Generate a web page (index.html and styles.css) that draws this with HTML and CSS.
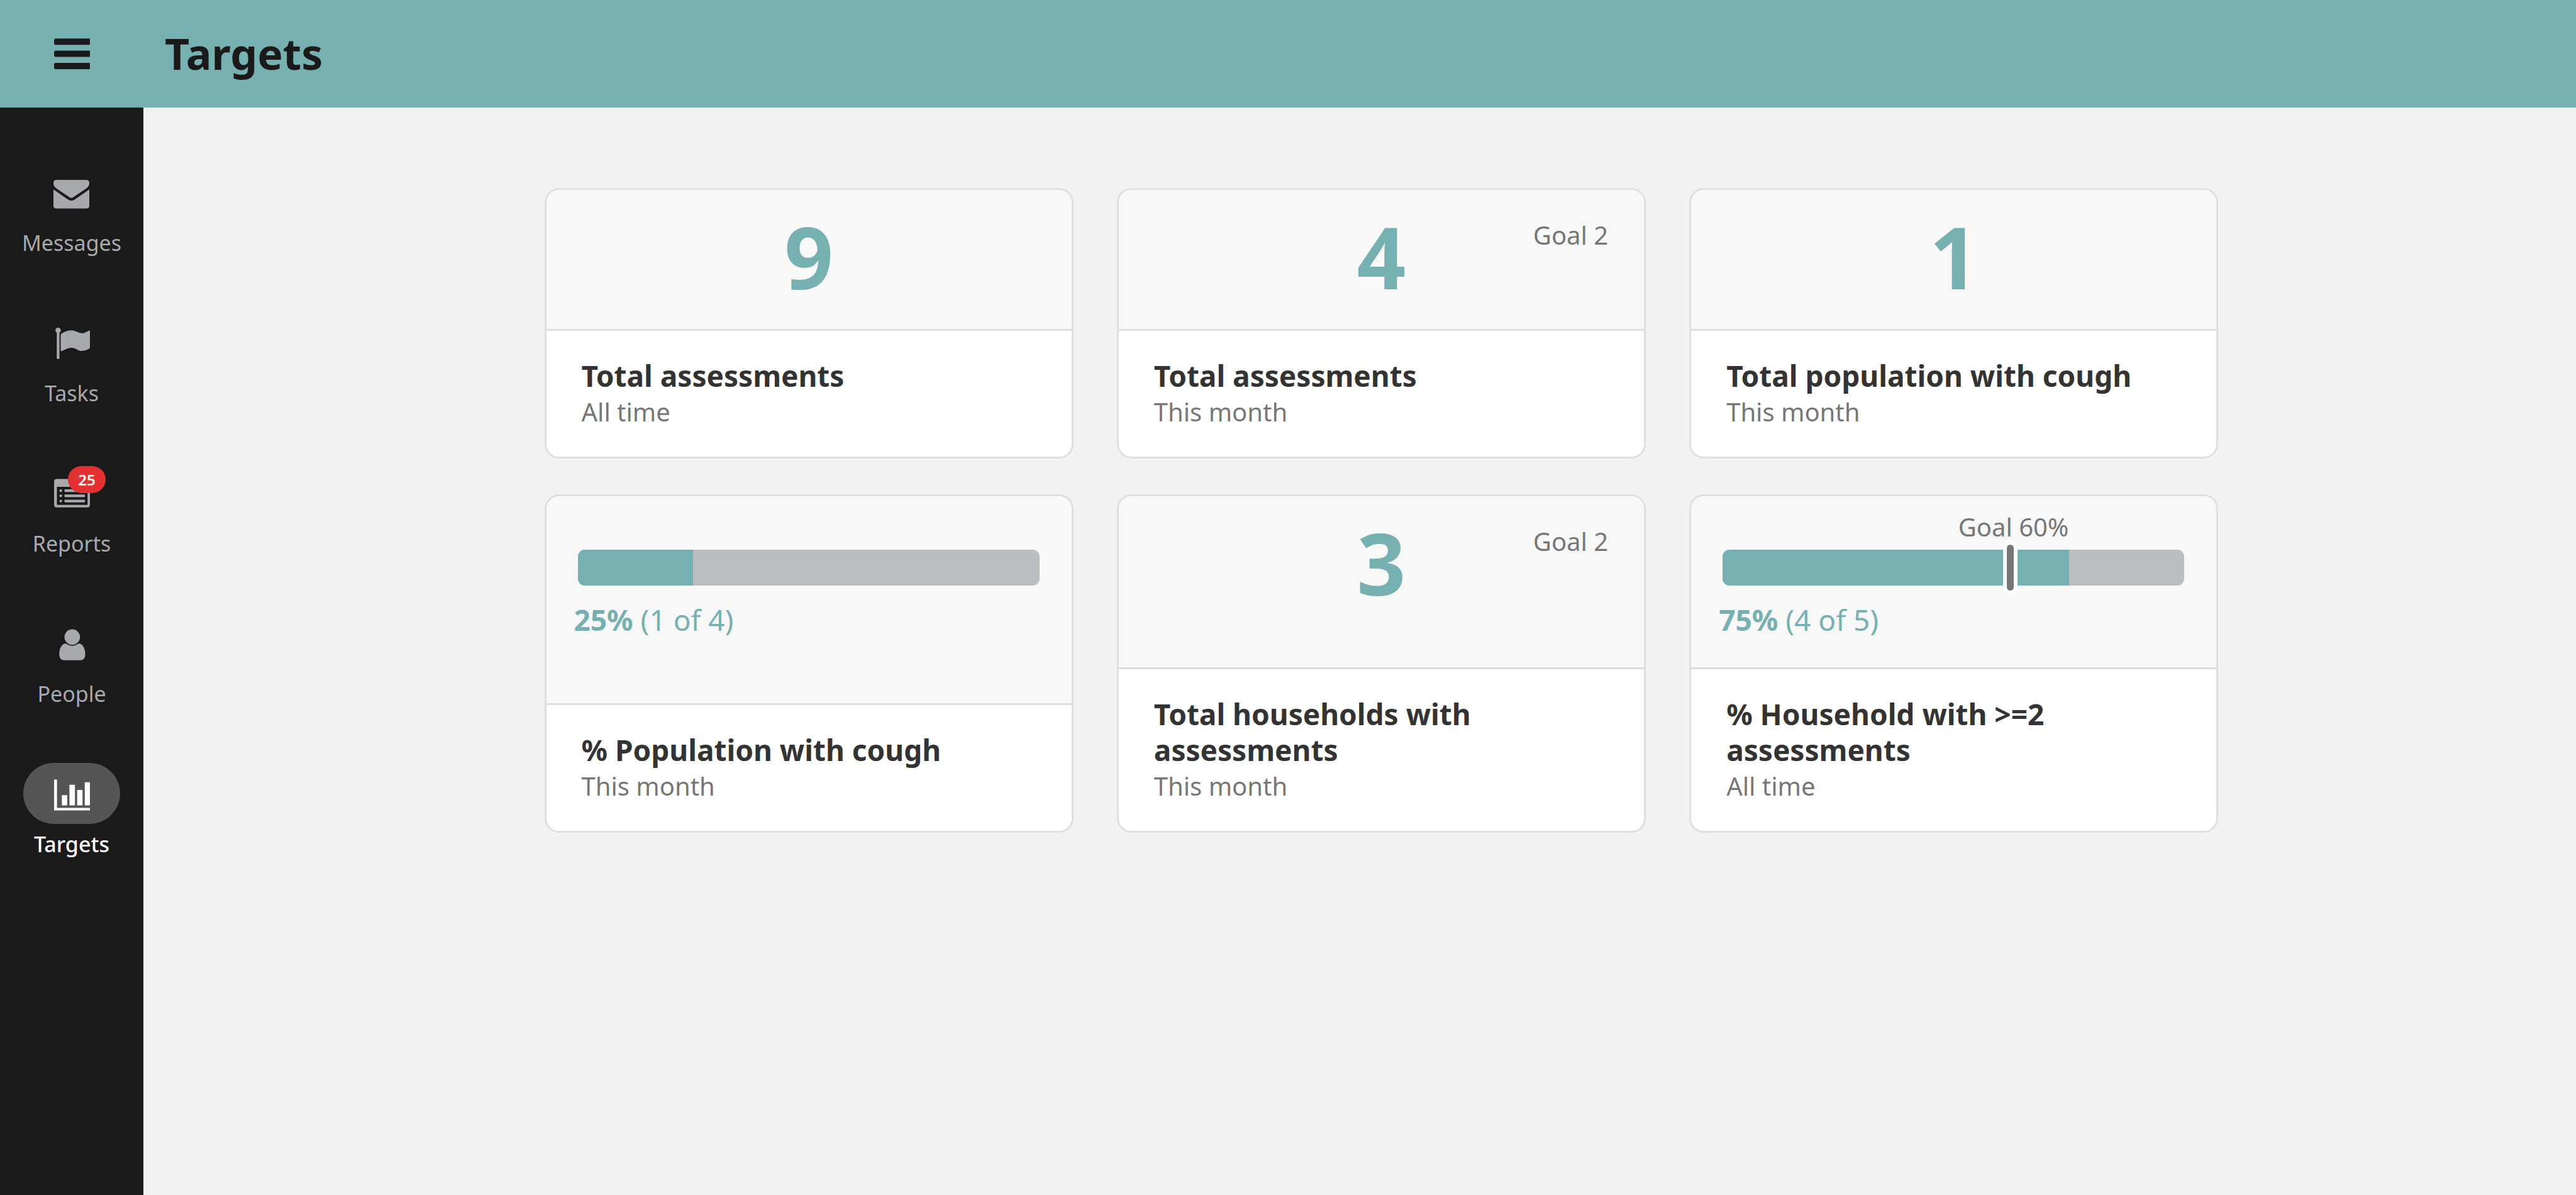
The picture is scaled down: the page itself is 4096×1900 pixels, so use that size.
FILE: index.html
```html
<!DOCTYPE html>
<html lang="en">
<head>
<meta charset="utf-8">
<title>Targets</title>
<link rel="stylesheet" href="styles.css">
</head>
<body>
<header class="topbar">
  <button class="menu-button" type="button" aria-label="Menu">
    <svg class="icon" viewBox="0 0 80 80" aria-hidden="true">
      <path d="M4 6H79Q80 6 80 7V19Q80 20 79 20H4Q0 20 0 16V10Q0 6 4 6ZM4 33H79Q80 33 80 34V46Q80 47 79 47H4Q0 47 0 43V37Q0 33 4 33ZM4 60.500H79Q80 60.500 80 61.500V73.500Q80 74.500 79 74.500H4Q0 74.500 0 70.500V64.500Q0 60.500 4 60.500Z"/>
    </svg>
  </button>
  <h1 class="page-title">Targets</h1>
</header>
<div class="layout">
  <nav class="sidebar">
    <a class="nav-item" href="#messages">
      <span class="nav-pill">
        <svg class="icon" viewBox="0 0 80 80" aria-hidden="true">
          <path d="M7 12.500H73Q80 12.500 80 20Q80 27 73 32L45 51Q40 55 35 51L7 32Q0 27 0 20Q0 12.500 7 12.500Z"/>
          <path d="M0 34L32 56Q40 62 48 56L80 34V70Q80 76.500 73 76.500H7Q0 76.500 0 70Z"/>
        </svg>
      </span>
      <span class="nav-label">Messages</span>
    </a>
    <a class="nav-item" href="#tasks">
      <span class="nav-pill">
        <svg class="icon" viewBox="0 0 80 80" aria-hidden="true">
          <circle cx="9" cy="13" r="6"/>
          <path d="M6 13H12V75Q12 77 10 77H8Q6 77 6 75Z"/>
          <path d="M14.700 24Q14.700 21 17 20Q28 13 39 13C48 13 54 19.400 62 19.400C70 19.400 76 13.200 78.500 13.200Q80 13 80 15V50Q80 52.600 78 54Q70 59 62 59C53 59 48 51.800 39 51.800Q30 51.800 18 59Q14.700 60 14.700 57Z"/>
        </svg>
      </span>
      <span class="nav-label">Tasks</span>
    </a>
    <a class="nav-item" href="#reports">
      <span class="nav-pill">
        <svg class="icon" viewBox="0 0 80 80" aria-hidden="true">
          <path fill-rule="evenodd" d="M6 9H74Q80 9 80 15V66.500Q80 72.500 74 72.500H6Q0 72.500 0 66.500V15Q0 9 6 9ZM6.300 26.700V67H74.700V26.700Z"/>
          <circle cx="15" cy="35.300" r="3"/><circle cx="15" cy="46.800" r="3"/><circle cx="15" cy="58.300" r="3"/>
          <rect x="23" y="32.300" width="46" height="6" rx="2"/><rect x="23" y="43.800" width="46" height="6" rx="2"/><rect x="23" y="55.300" width="46" height="6" rx="2"/>
        </svg>
        <span class="badge">25</span>
      </span>
      <span class="nav-label">Reports</span>
    </a>
    <a class="nav-item" href="#people">
      <span class="nav-pill">
        <svg class="icon" viewBox="0 0 80 80" aria-hidden="true">
          <circle cx="40.500" cy="26.500" r="17.300"/>
          <path d="M26.500 41Q40.500 51.500 54.500 41C64 41 69.500 52 69.500 65Q69.500 78.400 58.500 78.400H22.500Q11.500 78.400 11.500 65C11.500 52 17 41 26.500 41Z"/>
        </svg>
      </span>
      <span class="nav-label">People</span>
    </a>
    <a class="nav-item is-active" href="#targets" aria-current="page">
      <span class="nav-pill">
        <svg class="icon" viewBox="0 0 80 80" aria-hidden="true">
          <path d="M0 9H6.500V72.300H80V78H0ZM17.300 43.700H29.300V66.600H17.300ZM34.300 20.800H46.500V66.600H34.300ZM51.500 32.200H63.500V66.600H51.500ZM68.500 15H80V66.600H68.500Z"/>
        </svg>
      </span>
      <span class="nav-label">Targets</span>
    </a>
  </nav>
  <main class="content">
    <div class="targets">
      <section class="card">
        <div class="card-figure">
          <p class="count">9</p>
        </div>
        <div class="card-body">
          <h2 class="card-title">Total assessments</h2>
          <p class="card-period">All time</p>
        </div>
      </section>
      <section class="card">
        <div class="card-figure">
          <p class="count">4</p>
          <p class="count-goal">Goal 2</p>
        </div>
        <div class="card-body">
          <h2 class="card-title">Total assessments</h2>
          <p class="card-period">This month</p>
        </div>
      </section>
      <section class="card">
        <div class="card-figure">
          <p class="count">1</p>
        </div>
        <div class="card-body">
          <h2 class="card-title">Total population with cough</h2>
          <p class="card-period">This month</p>
        </div>
      </section>
      <section class="card">
        <div class="card-figure">
          <div class="progress">
            <div class="track"><div class="fill" style="width: 25%"></div></div>
          </div>
          <p class="progress-text"><strong>25%</strong> (1 of 4)</p>
        </div>
        <div class="card-body">
          <h2 class="card-title">% Population with cough</h2>
          <p class="card-period">This month</p>
        </div>
      </section>
      <section class="card">
        <div class="card-figure">
          <p class="count">3</p>
          <p class="count-goal">Goal 2</p>
        </div>
        <div class="card-body">
          <h2 class="card-title">Total households with assessments</h2>
          <p class="card-period">This month</p>
        </div>
      </section>
      <section class="card">
        <div class="card-figure">
          <div class="progress">
            <div class="track"><div class="fill" style="width: 75%"></div></div>
            <div class="goal" style="left: 60%">
              <span class="goal-label">Goal 60%</span>
              <span class="goal-marker"></span>
            </div>
          </div>
          <p class="progress-text"><strong>75%</strong> (4 of 5)</p>
        </div>
        <div class="card-body">
          <h2 class="card-title">% Household with &gt;=2 assessments</h2>
          <p class="card-period">All time</p>
        </div>
      </section>
    </div>
  </main>
</div>
</body>
</html>
```
FILE: styles.css
```css
:root {
  --teal: #76b0b0;
  --ink: #1a1a1a;
  --grey: #777;
  --line: #dfdfdf;
}

* { box-sizing: border-box; }

body {
  margin: 0;
  min-height: 100vh;
  display: flex;
  flex-direction: column;
  background: #f2f2f2;
  color: #333;
  font-family: "Noto Sans", "Open Sans", sans-serif;
  font-size: 40px;
  line-height: 57px;
}

h1, h2, p { margin: 0; }

.icon { display: block; width: 57px; height: 57px; fill: currentColor; }

.topbar {
  display: flex;
  align-items: center;
  height: 171px;
  background: var(--teal);
  color: var(--ink);
}

.menu-button {
  display: flex;
  justify-content: center;
  width: 228px;
  padding: 0;
  border: 0;
  background: none;
  color: inherit;
}

.page-title {
  padding: 0 0 2px 34px;
  font-size: 68px;
  line-height: 96px;
  font-weight: 700;
}

.layout { flex: 1; display: flex; }

.sidebar {
  flex: none;
  width: 228px;
  padding-top: 86px;
  display: flex;
  flex-direction: column;
  align-items: center;
  gap: 86px;
  background: var(--ink);
}

.nav-item {
  display: flex;
  flex-direction: column;
  align-items: center;
  gap: 8px;
  color: #a7a9ac;
  font-size: 34px;
  line-height: 48px;
  text-decoration: none;
}

.nav-pill {
  position: relative;
  display: flex;
  align-items: center;
  justify-content: center;
  width: 154px;
  height: 97px;
  border-radius: 49px;
}

.is-active { color: #fff; font-weight: 500; }
.is-active .nav-pill { background: #555; }

.badge {
  position: absolute;
  top: 6px;
  left: 71px;
  width: 60px;
  height: 43px;
  border-radius: 22px;
  background: #e33030;
  color: #fff;
  font-size: 24px;
  line-height: 43px;
  font-weight: 600;
  text-align: center;
}

.content { flex: 1; padding-top: 128px; }

.targets {
  max-width: 2731px;
  margin: 0 auto;
  padding-left: 69px;
  display: grid;
  grid-template-columns: repeat(3, 1fr);
  gap: 57px 69px;
}

.card {
  display: flex;
  flex-direction: column;
  border: 3px solid var(--line);
  border-radius: 23px;
  background: #fff;
  overflow: hidden;
}

.card-figure {
  position: relative;
  flex: 1;
  min-height: 224px;
  background: #f8f8f8;
  border-bottom: 3px solid var(--line);
}

.count {
  padding-top: 38px;
  color: var(--teal);
  font-size: 136px;
  line-height: 136px;
  font-weight: 700;
  text-align: center;
}

.count-goal {
  position: absolute;
  top: 43px;
  right: 57px;
  color: var(--grey);
}

.progress { position: relative; margin: 85px 51px 0 50px; }

.track {
  height: 57px;
  border-radius: 11px;
  background: #bcbdbf;
  overflow: hidden;
}

.fill { height: 100%; background: var(--teal); }

.progress-text {
  padding: 26px 44px 47px;
  color: var(--teal);
  font-size: 46px;
}

.goal { position: absolute; top: -14px; }

.goal-label {
  position: absolute;
  bottom: 100%;
  left: -66px;
  padding-bottom: 2px;
  line-height: 40px;
  color: var(--grey);
  white-space: nowrap;
}

.goal-marker {
  display: block;
  width: 23px;
  height: 85px;
  margin-left: 5px;
  border: 6px solid #fff;
  border-radius: 12px;
  background: var(--grey);
}

.card-body { padding: 43px 56px; }

.card-title {
  font-size: 46px;
  line-height: 57px;
  font-weight: 700;
}

.card-period { color: var(--grey); }
```
